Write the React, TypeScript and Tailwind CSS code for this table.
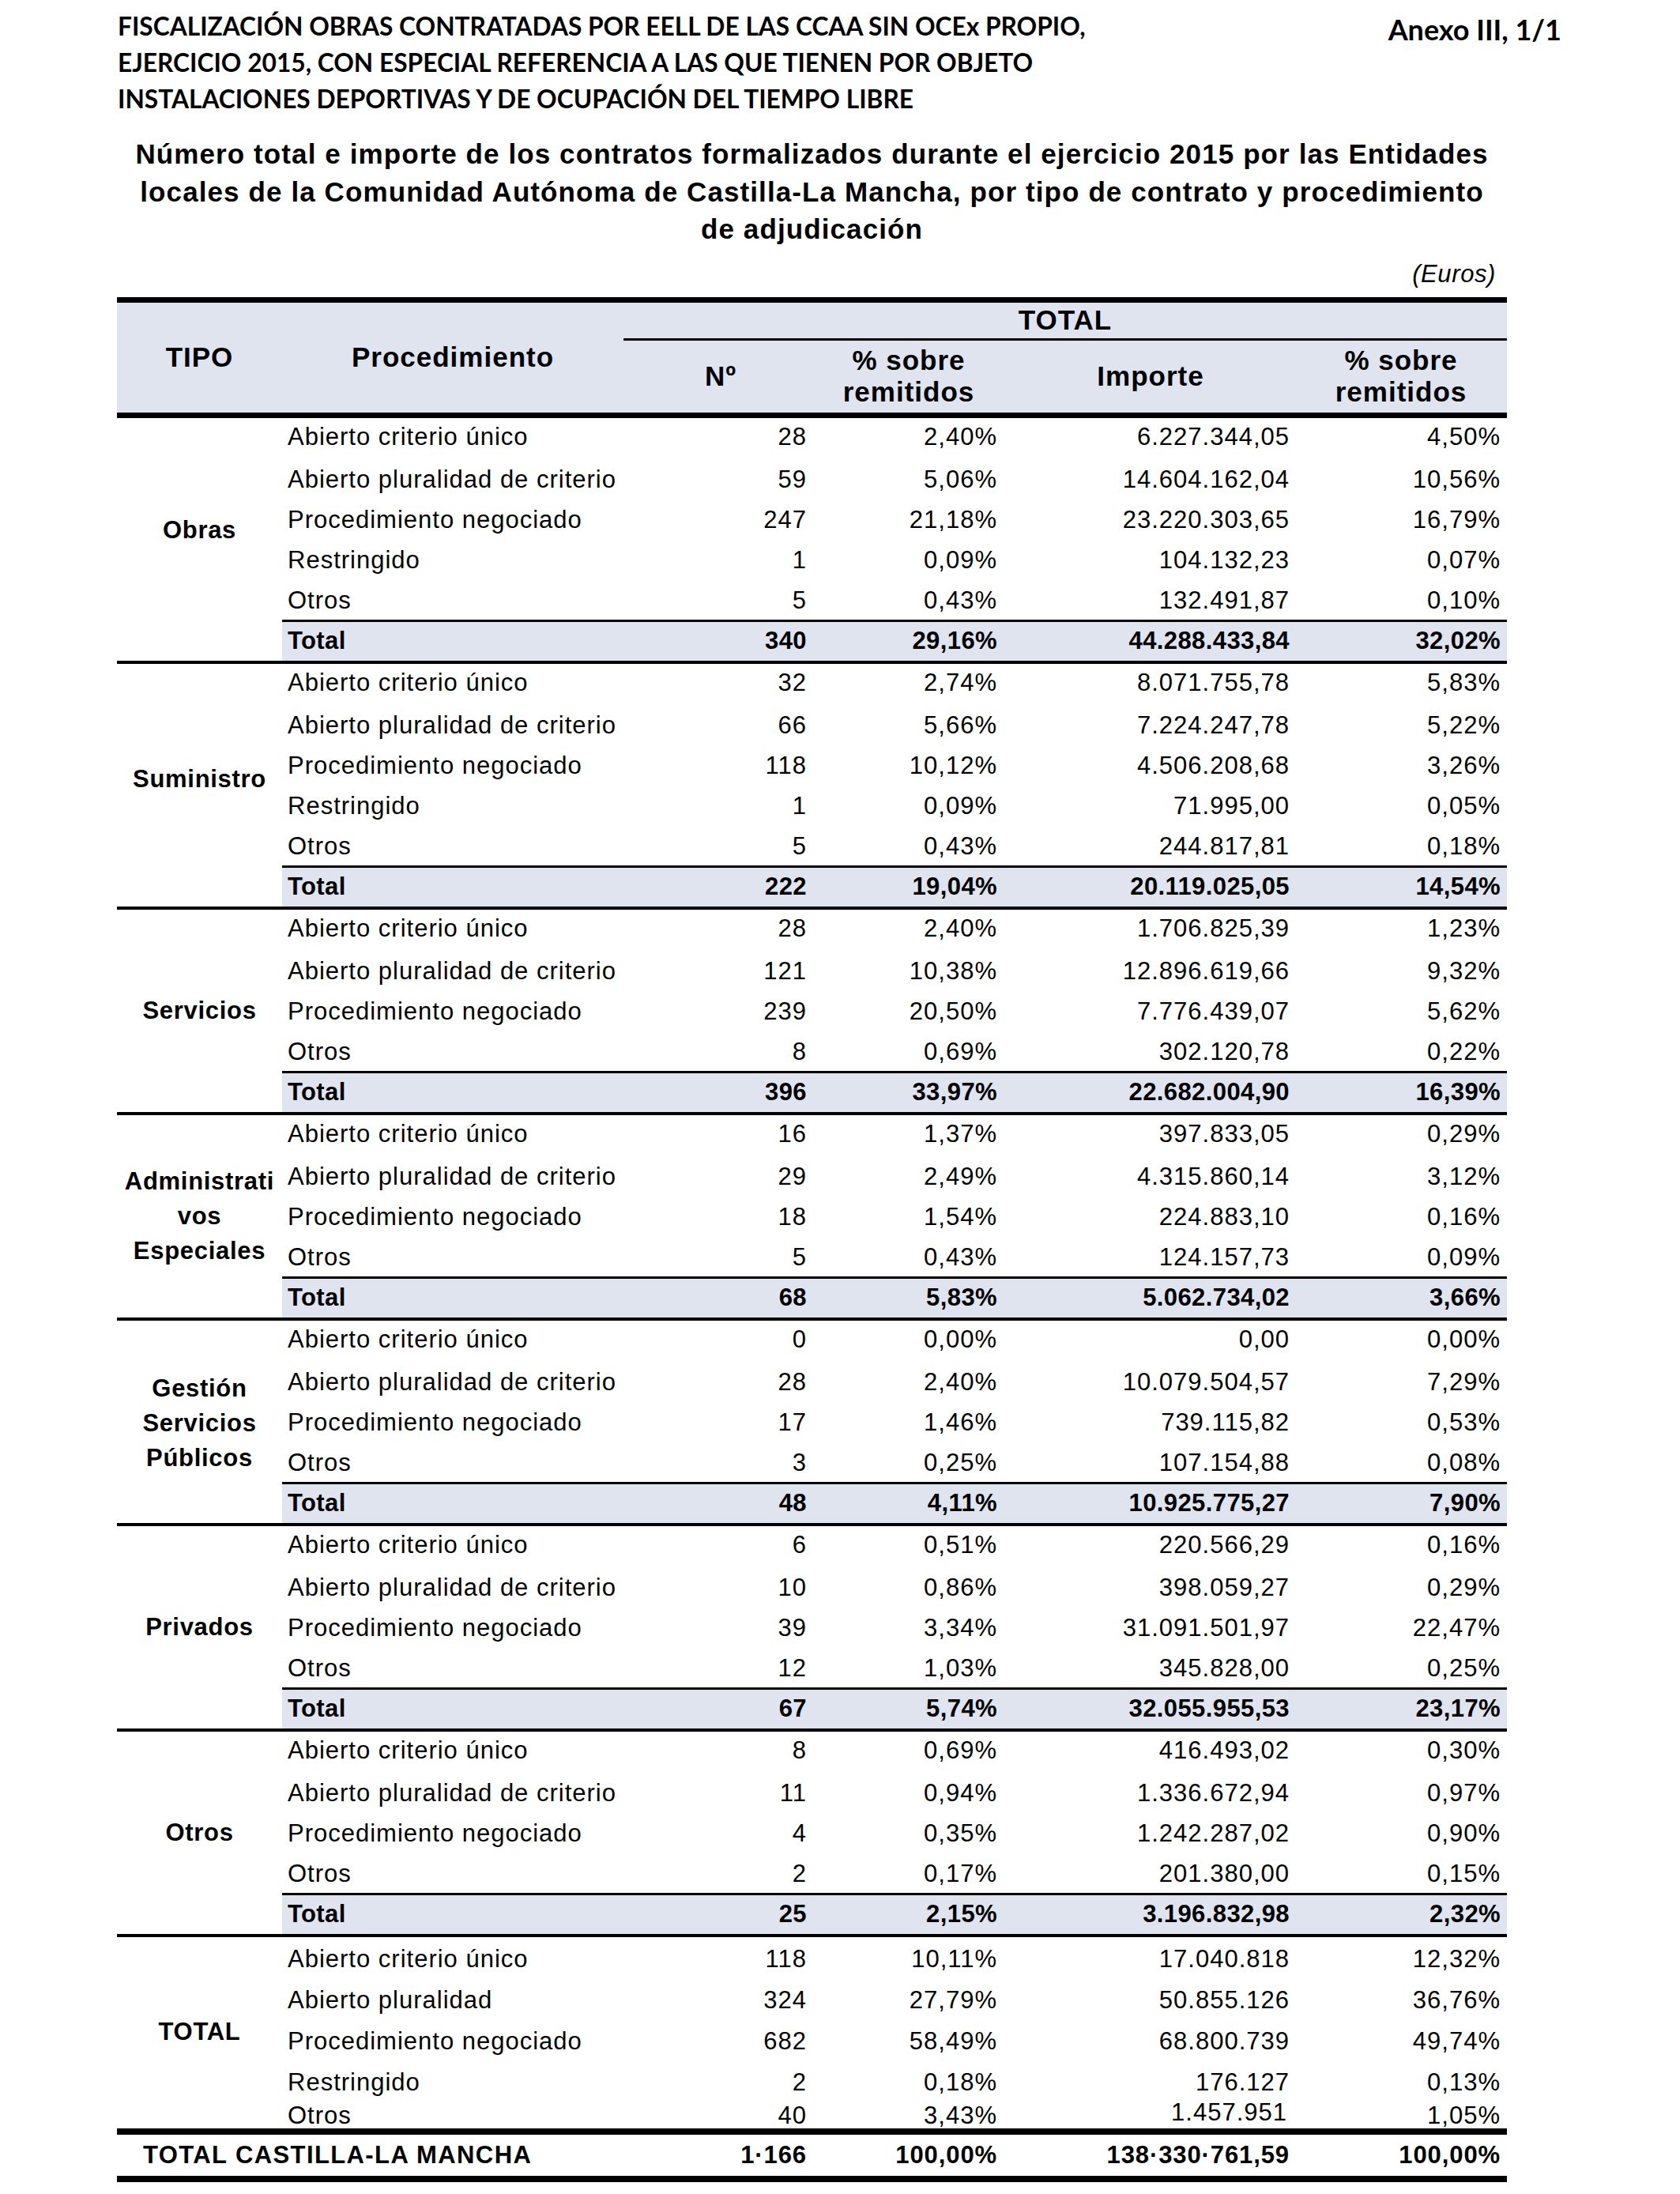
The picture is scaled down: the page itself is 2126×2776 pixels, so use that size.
import React from "react";

type Row = [string, string, string, string, string];

interface Section {
  label: string[];
  rows: Row[];
  total: Row;
  labelPad?: string;
}

const sections: Section[] = [
  {
    label: ["Obras"],
    labelPad: "pb-[22px]",
    rows: [
      ["Abierto criterio único", "28", "2,40%", "6.227.344,05", "4,50%"],
      ["Abierto pluralidad de criterio", "59", "5,06%", "14.604.162,04", "10,56%"],
      ["Procedimiento negociado", "247", "21,18%", "23.220.303,65", "16,79%"],
      ["Restringido", "1", "0,09%", "104.132,23", "0,07%"],
      ["Otros", "5", "0,43%", "132.491,87", "0,10%"],
    ],
    total: ["Total", "340", "29,16%", "44.288.433,84", "32,02%"],
  },
  {
    label: ["Suministro"],
    labelPad: "pb-[14px]",
    rows: [
      ["Abierto criterio único", "32", "2,74%", "8.071.755,78", "5,83%"],
      ["Abierto pluralidad de criterio", "66", "5,66%", "7.224.247,78", "5,22%"],
      ["Procedimiento negociado", "118", "10,12%", "4.506.208,68", "3,26%"],
      ["Restringido", "1", "0,09%", "71.995,00", "0,05%"],
      ["Otros", "5", "0,43%", "244.817,81", "0,18%"],
    ],
    total: ["Total", "222", "19,04%", "20.119.025,05", "14,54%"],
  },
  {
    label: ["Servicios"],
    rows: [
      ["Abierto criterio único", "28", "2,40%", "1.706.825,39", "1,23%"],
      ["Abierto pluralidad de criterio", "121", "10,38%", "12.896.619,66", "9,32%"],
      ["Procedimiento negociado", "239", "20,50%", "7.776.439,07", "5,62%"],
      ["Otros", "8", "0,69%", "302.120,78", "0,22%"],
    ],
    total: ["Total", "396", "33,97%", "22.682.004,90", "16,39%"],
  },
  {
    label: ["Administrati", "vos", "Especiales"],
    rows: [
      ["Abierto criterio único", "16", "1,37%", "397.833,05", "0,29%"],
      ["Abierto pluralidad de criterio", "29", "2,49%", "4.315.860,14", "3,12%"],
      ["Procedimiento negociado", "18", "1,54%", "224.883,10", "0,16%"],
      ["Otros", "5", "0,43%", "124.157,73", "0,09%"],
    ],
    total: ["Total", "68", "5,83%", "5.062.734,02", "3,66%"],
  },
  {
    label: ["Gestión", "Servicios", "Públicos"],
    labelPad: "pt-[4px]",
    rows: [
      ["Abierto criterio único", "0", "0,00%", "0,00", "0,00%"],
      ["Abierto pluralidad de criterio", "28", "2,40%", "10.079.504,57", "7,29%"],
      ["Procedimiento negociado", "17", "1,46%", "739.115,82", "0,53%"],
      ["Otros", "3", "0,25%", "107.154,88", "0,08%"],
    ],
    total: ["Total", "48", "4,11%", "10.925.775,27", "7,90%"],
  },
  {
    label: ["Privados"],
    rows: [
      ["Abierto criterio único", "6", "0,51%", "220.566,29", "0,16%"],
      ["Abierto pluralidad de criterio", "10", "0,86%", "398.059,27", "0,29%"],
      ["Procedimiento negociado", "39", "3,34%", "31.091.501,97", "22,47%"],
      ["Otros", "12", "1,03%", "345.828,00", "0,25%"],
    ],
    total: ["Total", "67", "5,74%", "32.055.955,53", "23,17%"],
  },
  {
    label: ["Otros"],
    rows: [
      ["Abierto criterio único", "8", "0,69%", "416.493,02", "0,30%"],
      ["Abierto pluralidad de criterio", "11", "0,94%", "1.336.672,94", "0,97%"],
      ["Procedimiento negociado", "4", "0,35%", "1.242.287,02", "0,90%"],
      ["Otros", "2", "0,17%", "201.380,00", "0,15%"],
    ],
    total: ["Total", "25", "2,15%", "3.196.832,98", "2,32%"],
  },
];

const totalRows: Row[] = [
  ["Abierto criterio único", "118", "10,11%", "17.040.818", "12,32%"],
  ["Abierto pluralidad", "324", "27,79%", "50.855.126", "36,76%"],
  ["Procedimiento negociado", "682", "58,49%", "68.800.739", "49,74%"],
  ["Restringido", "2", "0,18%", "176.127", "0,13%"],
  ["Otros", "40", "3,43%", "1.457.951", "1,05%"],
];

function Cells({ row, raised }: { row: Row; raised?: boolean }) {
  return (
    <>
      <div className="pl-[7px] whitespace-nowrap">{row[0]}</div>
      <div className="text-right pr-[24px] whitespace-nowrap">{row[1]}</div>
      <div className="text-right pr-[65px] whitespace-nowrap">{row[2]}</div>
      <div className={`text-right whitespace-nowrap ${raised ? "pb-[9px] pr-[32px]" : "pr-[29px]"}`}>{row[3]}</div>
      <div className="text-right pr-[8px] whitespace-nowrap">{row[4]}</div>
    </>
  );
}

function SectionBlock({ s }: { s: Section }) {
  return (
    <div className="flex border-b-[4px] border-black">
      <div
        className={`w-[209px] shrink-0 flex flex-col items-center justify-center text-center font-bold text-[31px] leading-[44px] tracking-[0.7px] ${s.labelPad ?? ""}`}
      >
        {s.label.map((l) => (
          <span key={l} className="whitespace-nowrap">
            {l}
          </span>
        ))}
      </div>
      <div className="flex-1 flex flex-col">
        {s.rows.map((r, i) => (
          <div
            key={i}
            className={`grid grid-cols-[432px_256px_282px_334px_246px] items-center h-[51px] text-[31px] leading-[36px] tracking-[1px] ${i === 0 ? "pb-[2px]" : "pt-[4px]"}`}
          >
            <Cells row={r} />
          </div>
        ))}
        <div className="grid grid-cols-[432px_256px_282px_334px_246px] items-center h-[52px] border-t-[3px] border-black bg-[#dfe4ee] font-bold text-[31px] leading-[36px] tracking-[0.4px]">
          <Cells row={s.total} />
        </div>
      </div>
    </div>
  );
}

export default function App() {
  return (
    <div className="w-[2126px] h-[2776px] bg-white text-black font-['Liberation_Sans',Arial,sans-serif] overflow-hidden">
      <div className="flex justify-between pl-[149px] pr-[150px] pt-[10px]">
        <div className="font-['Lato',sans-serif] font-bold text-[31.7px] leading-[46px]">
          <div className="whitespace-nowrap">FISCALIZACIÓN OBRAS CONTRATADAS POR EELL DE LAS CCAA SIN OCEx PROPIO,</div>
          <div className="whitespace-nowrap">EJERCICIO 2015, CON ESPECIAL REFERENCIA A LAS QUE TIENEN POR OBJETO</div>
          <div className="whitespace-nowrap">INSTALACIONES DEPORTIVAS Y DE OCUPACIÓN DEL TIEMPO LIBRE</div>
        </div>
        <div className="font-['Lato',sans-serif] font-bold text-[36px] leading-[46px] pt-[4px] whitespace-nowrap">
          Anexo III, 1/1
        </div>
      </div>

      <div className="ml-[148px] w-[1759px]">
        <div className="mt-[23px] text-center font-bold text-[35px] leading-[47.5px] tracking-[1.1px]">
          <div className="whitespace-nowrap">
            Número total e importe de los contratos formalizados durante el ejercicio 2015 por las Entidades
          </div>
          <div className="whitespace-nowrap">
            locales de la Comunidad Autónoma de Castilla-La Mancha, por tipo de contrato y procedimiento
          </div>
          <div className="whitespace-nowrap">de adjudicación</div>
        </div>

        <div className="mt-[16px] text-right pr-[14px] italic text-[31px] leading-[34px] tracking-[0.6px]">
          (Euros)
        </div>

        <div className="mt-[12px]">
          {/* Header */}
          <div className="grid grid-cols-[209px_432px_256px_282px_334px_246px] grid-rows-[45px_3px_91px] border-t-[7px] border-b-[7px] border-black bg-[#dfe4ee] font-bold text-[35px] tracking-[1px]">
            <div className="row-span-3 flex items-center justify-center">TIPO</div>
            <div className="row-span-3 flex items-center justify-center">Procedimiento</div>
            <div className="col-span-4 flex items-center justify-center">TOTAL</div>
            <div className="col-span-4 bg-black" />
            <div className="flex items-center justify-center pr-[10px]">Nº</div>
            <div className="flex flex-col items-center justify-center pr-[72px] leading-[40px]">
              <span>% sobre</span>
              <span>remitidos</span>
            </div>
            <div className="flex items-center justify-center pr-[76px]">Importe</div>
            <div className="flex flex-col items-center justify-center pr-[22px] leading-[40px]">
              <span>% sobre</span>
              <span>remitidos</span>
            </div>
          </div>

          {sections.map((s) => (
            <SectionBlock key={s.label.join("")} s={s} />
          ))}

          {/* TOTAL section */}
          <div className="flex">
            <div className="w-[209px] shrink-0 flex items-center justify-center font-bold text-[31px] tracking-[0.7px]">
              TOTAL
            </div>
            <div className="flex-1 flex flex-col">
              {totalRows.map((r, i) => (
                <div
                  key={i}
                  className={`grid grid-cols-[432px_256px_282px_334px_246px] items-center text-[31px] tracking-[1px] ${i === 4 ? "h-[34px] pb-[6px] leading-[28px]" : "h-[52px] pt-[4px] leading-[36px]"}`}
                >
                  <Cells row={r} raised={i === 4} />
                </div>
              ))}
            </div>
          </div>

          {/* Castilla-La Mancha */}
          <div className="grid grid-cols-[641px_256px_282px_334px_246px] items-center h-[68px] border-t-[8px] border-b-[8px] border-black font-bold text-[31px] leading-[36px] tracking-[0.9px]">
            <div className="pl-[33px] whitespace-nowrap tracking-[1.4px]">TOTAL CASTILLA-LA MANCHA</div>
            <div className="text-right pr-[24px] whitespace-nowrap">1·166</div>
            <div className="text-right pr-[65px] whitespace-nowrap">100,00%</div>
            <div className="text-right pr-[29px] whitespace-nowrap">138·330·761,59</div>
            <div className="text-right pr-[8px] whitespace-nowrap">100,00%</div>
          </div>
        </div>
      </div>
    </div>
  );
}
